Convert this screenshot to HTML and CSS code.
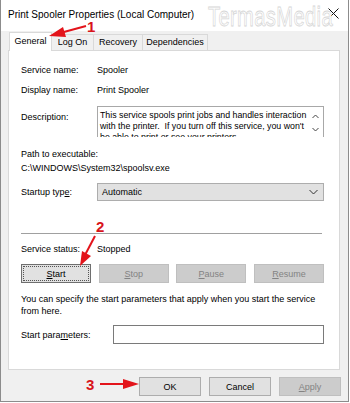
FILE: index.html
```html
<!DOCTYPE html>
<html lang="en">
  <head>
    <meta charset="UTF-8">
    <title>Print Spooler Properties</title>
    <link rel="stylesheet" href="styles.css">
  </head>
  <body>
    <div class="window">
      <!-- Title bar -->
      <div class="titlebar">
        <span class="title">Print Spooler Properties (Local Computer)</span>
        <span class="watermark">TermasMedia</span>
        <svg class="close" width="11" height="11" viewBox="0 0 11 11">
          <path d="M0.5 0.5 L10.5 10.5 M10.5 0.5 L0.5 10.5" stroke="#111" stroke-width="1" fill="none"/>
        </svg>
      </div>

      <!-- Tabs -->
      <div class="tabs">
        <div class="tab active">General</div>
        <div class="tab tab-logon">Log On</div>
        <div class="tab tab-recovery">Recovery</div>
        <div class="tab tab-deps">Dependencies</div>
      </div>

      <!-- General page -->
      <div class="panel">
        <div class="row first">
          <span class="label">Service name:</span>
          <span>Spooler</span>
        </div>
        <div class="row">
          <span class="label">Display name:</span>
          <span>Print Spooler</span>
        </div>
        <div class="row desc-row">
          <span class="label desc-label">Description:</span>
          <div class="desc-box">
            <div class="desc-text">This service spools print jobs and handles interaction<br>with the printer.&nbsp; If you turn off this service, you won't<br>be able to print or see your printers.</div>
            <div class="desc-scroll">
              <svg width="7" height="5" viewBox="0 0 7 5"><path d="M0.5 4 L3.5 1 L6.5 4" stroke="#444" fill="none"/></svg>
              <svg width="7" height="5" viewBox="0 0 7 5"><path d="M0.5 1 L3.5 4 L6.5 1" stroke="#444" fill="none"/></svg>
            </div>
          </div>
        </div>
        <div class="path">
          <div>Path to executable:</div>
          <div>C:\WINDOWS\System32\spoolsv.exe</div>
        </div>
        <div class="row startup-row">
          <span class="label">Startup typ<u>e</u>:</span>
          <div class="combo">
            <span>Automatic</span>
            <svg width="9" height="6" viewBox="0 0 9 6"><path d="M0.5 1 L4.5 5 L8.5 1" stroke="#333" fill="none"/></svg>
          </div>
        </div>
        <div class="separator"></div>
        <div class="row status-row">
          <span class="label">Service status:</span>
          <span>Stopped</span>
        </div>
        <div class="service-buttons">
          <div class="btn focused"><span><u>S</u>tart</span></div>
          <div class="btn disabled"><u>S</u>top</div>
          <div class="btn disabled"><u>P</u>ause</div>
          <div class="btn disabled"><u>R</u>esume</div>
        </div>
        <p class="hint">You can specify the start parameters that apply when you start the service<br>from here.</p>
        <div class="row params-row">
          <span class="label params-label">Start para<u>m</u>eters:</span>
          <div class="input"></div>
        </div>
      </div>

      <!-- Dialog buttons -->
      <div class="footer">
        <div class="btn dialog-btn">OK</div>
        <div class="btn dialog-btn">Cancel</div>
        <div class="btn dialog-btn disabled"><u>A</u>pply</div>
      </div>

      <!-- Tutorial annotations -->
      <svg class="annotations" width="350" height="403" viewBox="0 0 350 403">
        <g fill="#e3141b" stroke="#e3141b">
          <line x1="86" y1="26" x2="62" y2="32.5" stroke-width="2"/>
          <polygon points="49,36 66,37 63,27" stroke="none"/>
          <line x1="95" y1="236" x2="85" y2="255" stroke-width="2"/>
          <polygon points="80,266 91,256 82,251" stroke="none"/>
          <line x1="100" y1="384" x2="125" y2="384" stroke-width="2"/>
          <polygon points="139,384 123,379 123,389" stroke="none"/>
        </g>
        <g class="num" fill="#d8141b">
          <text x="87" y="32">1</text>
          <text x="96" y="232">2</text>
          <text x="86" y="390">3</text>
        </g>
      </svg>
    </div>
  </body>
</html>
```

FILE: styles.css
```css
body {
  margin: 0;
  background: #ffffff;
  font-family: "Liberation Sans", Arial, sans-serif;
  font-size: 9px;
  color: #000;
}

.window {
  position: relative;
  box-sizing: border-box;
  width: 349px;
  height: 402px;
  background: #f0f0f0;
  border: 1px solid #8c8c8c;
  border-top: none;
  overflow: hidden;
}

/* Title bar */
.titlebar {
  position: relative;
  display: flex;
  align-items: center;
  height: 31px;
  padding-left: 7px;
  background: #ffffff;
  font-size: 10px;
}

.title {
  flex: 1;
  margin-top: -3px;
}

.watermark {
  position: absolute;
  left: 207px;
  top: 3px;
  font-size: 28px;
  line-height: 28px;
  color: #ffffff;
  -webkit-text-stroke: 0.8px #d6d6d6;
  transform: scaleX(0.72);
  transform-origin: left top;
  letter-spacing: 0.5px;
}

.close {
  margin-right: 9px;
  margin-top: -4px;
}

/* Tabs */
.tabs {
  display: flex;
  align-items: flex-end;
  height: 20px;
  padding-left: 8px;
  margin-bottom: -1px;
  position: relative;
  z-index: 2;
}

.tab {
  box-sizing: border-box;
  height: 16px;
  margin-bottom: 1px;
  border: 1px solid #d9d9d9;
  border-bottom: none;
  background: #f0f0f0;
  text-align: center;
  line-height: 14px;
}

.tab.active {
  width: 43px;
  height: 19px;
  margin-bottom: 0;
  margin-right: -1px;
  background: #ffffff;
  line-height: 16px;
}

.tab-logon { width: 43px; }
.tab-recovery { width: 49px; border-left: none; }
.tab-deps { width: 65px; border-left: none; }

/* Panel */
.panel {
  box-sizing: border-box;
  height: 320px;
  margin: 0 8px 0 7px;
  padding: 0 15px 0 12px;
  background: #ffffff;
  border: 1px solid #d9d9d9;
  position: relative;
  z-index: 1;
}

.row {
  display: flex;
  align-items: center;
  line-height: 12px;
}

.row.first {
  padding-top: 13px;
}

.row + .row {
  margin-top: 8px;
}

.label {
  width: 76px;
  flex: none;
}

.desc-row {
  align-items: flex-start;
}

.row.desc-row {
  margin-top: 10px;
}

.desc-label {
  padding-top: 5px;
}

.desc-box {
  flex: 1;
  display: flex;
  height: 31px;
  box-sizing: border-box;
  border: 1px solid #a8a8a8;
  border-bottom: none;
  overflow: hidden;
}

.desc-text {
  flex: 1;
  padding: 3px 0 0 2px;
  line-height: 11px;
  font-size: 8.8px;
  white-space: nowrap;
  overflow: hidden;
}

.desc-scroll {
  width: 15px;
  display: flex;
  flex-direction: column;
  align-items: center;
  justify-content: space-around;
  padding: 3px 0 1px;
}

.path {
  margin-top: 10px;
  line-height: 14px;
}

.row.startup-row {
  margin-top: 8px;
}

.combo {
  flex: 1;
  box-sizing: border-box;
  height: 18px;
  display: flex;
  align-items: center;
  justify-content: space-between;
  padding: 0 5px 0 4px;
  background: #e1e1e1;
  border: 1px solid #adadad;
}

.separator {
  height: 1px;
  margin: 32px 2px 0 0;
  background: #a0a0a0;
}

.row.status-row {
  margin-top: 9px;
}

/* Buttons */
.btn {
  box-sizing: border-box;
  display: flex;
  align-items: center;
  justify-content: center;
  height: 19px;
  background: #e1e1e1;
  border: 1px solid #adadad;
}

.btn.disabled {
  background: #cccccc;
  border-color: #bfbfbf;
  color: #838383;
}

.btn.focused {
  border-color: #6f6f6f;
  padding: 1px;
}

.btn.focused span {
  display: flex;
  align-items: center;
  justify-content: center;
  width: 100%;
  height: 100%;
  box-sizing: border-box;
  border: 1px dotted #555;
}

.service-buttons {
  display: flex;
  justify-content: space-between;
  margin-top: 9px;
}

.service-buttons .btn {
  width: 70px;
}

.hint {
  margin: 10px 0 0;
  line-height: 12px;
}

.row.params-row {
  margin-top: 8px;
}

.params-label {
  width: 92px;
}

.input {
  flex: 1;
  height: 19px;
  box-sizing: border-box;
  background: #ffffff;
  border: 1px solid #7a7a7a;
}

.footer {
  display: flex;
  justify-content: flex-end;
  gap: 8px;
  padding: 7px 7px 0 0;
}

.dialog-btn {
  width: 62px;
}

/* Annotations overlay */
.annotations {
  position: absolute;
  left: -1px;
  top: 0;
  z-index: 5;
}

.num text {
  font-family: "Liberation Sans", Arial, sans-serif;
  font-weight: bold;
  font-size: 15px;
}
```
